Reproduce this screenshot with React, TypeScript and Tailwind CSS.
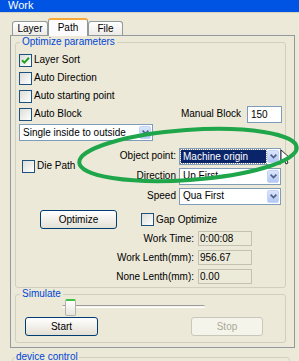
import React from 'react';

// checkbox in the XP luna style
const Check = ({ checked = false }: { checked?: boolean }) => (
  <span className="w-[13px] h-[13px] shrink-0 border border-[#1c5180] bg-linear-to-br from-[#dcdcd7] to-white flex items-center justify-center">
    {checked && (
      <svg width="9" height="9" viewBox="0 0 9 9">
        <path d="M1 4.2 L3.4 6.6 L8 1.8" stroke="#21a121" strokeWidth="2" fill="none" />
      </svg>
    )}
  </span>
);

const CheckRow = ({ label, checked }: { label: string; checked?: boolean }) => (
  <div className="flex items-center gap-[2px] h-[18px]">
    <Check checked={checked} />
    <span>{label}</span>
  </div>
);

const Arrow = () => (
  <span className="w-[12px] h-full shrink-0 rounded-[2px] border border-[#c6d4f7] bg-linear-to-b from-[#dbe6fd] to-[#b2c7f5] flex items-center justify-center">
    <svg width="7" height="5" viewBox="0 0 7 5">
      <path d="M0.6 0.6 L3.5 3.6 L6.4 0.6" stroke="#4d6185" strokeWidth="1.6" fill="none" />
    </svg>
  </span>
);

const Combo = ({ value, className, selected }: { value: string; className: string; selected?: boolean }) => (
  <div className={`flex items-center h-[17px] border border-[#7f9db9] bg-white p-px ${className}`}>
    {selected ? (
      <span className="flex-1 h-full mr-px pl-[2px] leading-[13px] bg-[#0a246a] text-white outline-1 outline-dotted outline-[#8a8a8a] whitespace-nowrap overflow-hidden">
        {value}
      </span>
    ) : (
      <span className="flex-1 pl-[2px] whitespace-nowrap overflow-hidden">{value}</span>
    )}
    <Arrow />
  </div>
);

const StatRow = ({ label, value }: { label: string; value: string }) => (
  <div className="flex items-center h-[19px]">
    <span className="w-[178px] text-right">{label}</span>
    <span className="ml-[4px] w-[54px] h-[15px] pl-[1px] leading-[13px] border border-[#c3c1b4] bg-[#ecead9]">{value}</span>
  </div>
);

export default function App() {
  return (
    <div className="relative w-[299px] h-[361px] overflow-hidden bg-[#ece9d8] text-[10px] text-black font-['Liberation_Sans',Arial,sans-serif] leading-[12px]">
      {/* title bar */}
      <div className="h-[12px] bg-[#0054e3] text-white text-[11px] leading-[11px] pl-[8px]">Work</div>
      <div className="h-px bg-[#d6d2c2]" />

      <div className="pl-[10px]">
        {/* tabs */}
        <div className="flex items-end h-[22px] pl-[2px]">
          <div className="w-[36px] h-[14px] border border-b-0 border-[#919b9c] rounded-t-[3px] bg-linear-to-b from-white to-[#ecebe6] flex items-center justify-center pt-[1px]">
            Layer
          </div>
          <div className="relative z-10 -mb-px w-[40px] h-[18px] border-x border-[#919b9c] border-t-[2px] border-t-[#f5a93a] rounded-t-[3px] bg-[#fcfcfe] flex items-start justify-center pt-[2px]">
            Path
          </div>
          <div className="w-[35px] h-[14px] border border-b-0 border-[#919b9c] rounded-t-[3px] bg-linear-to-b from-white to-[#ecebe6] flex items-center justify-center pt-[1px]">
            File
          </div>
        </div>

        {/* tab panel */}
        <div className="w-[285px] h-[313px] border border-[#919b9c] pl-[4px]">
          <fieldset className="w-[271px] border border-[#d0d0bf] rounded-[3px] pb-[1px]">
            <legend className="ml-[4px] px-[2px] text-[#0046d5] leading-[12px]">Optimize parameters</legend>
            <div className="pl-[3px] pt-[3px]">
              <CheckRow label="Layer Sort" checked />
              <CheckRow label="Auto Direction" />
              <CheckRow label="Auto starting point" />
              <div className="flex items-center h-[18px] pr-[3px]">
                <Check />
                <span className="ml-[2px]">Auto Block</span>
                <span className="ml-auto">Manual Block</span>
                <span className="ml-[6px] w-[35px] h-[17px] pl-[3px] leading-[15px] border border-[#7f9db9] bg-white">150</span>
              </div>
              <Combo value="Single inside to outside" className="w-[134px] mt-px" />
            </div>

            <div className="flex">
              <div className="w-[100px] pl-[6px] pt-[16px]">
                <CheckRow label="Die Path" />
              </div>
              <div className="pt-[5px] grid grid-cols-[60px_102px] gap-x-[3px]">
                <span className="h-[20px] flex items-center justify-end">Object point:</span>
                <div className="h-[20px] flex items-center">
                  <Combo value="Machine origin" className="w-[102px]" selected />
                </div>
                <span className="h-[20px] flex items-center justify-end">Direction</span>
                <div className="h-[20px] flex items-center">
                  <Combo value="Up First" className="w-[102px]" />
                </div>
                <span className="h-[20px] flex items-center justify-end">Speed</span>
                <div className="h-[20px] flex items-center">
                  <Combo value="Qua First" className="w-[102px]" />
                </div>
              </div>
            </div>

            <div className="flex items-center mt-[4px] h-[19px]">
              <button className="ml-[24px] w-[77px] h-[19px] rounded-[3px] border border-[#003c74] bg-linear-to-b from-white to-[#e3e0d5]">
                Optimize
              </button>
              <div className="ml-[24px] flex items-center gap-[2px]">
                <Check />
                <span>Gap Optimize</span>
              </div>
            </div>

            <StatRow label="Work Time:" value="0:00:08" />
            <StatRow label="Work Lenth(mm):" value="956.67" />
            <StatRow label="None Lenth(mm):" value="0.00" />
          </fieldset>

          <fieldset className="w-[271px] mt-px border border-[#d0d0bf] rounded-[3px] pb-[6px]">
            <legend className="ml-[4px] px-[2px] text-[#0046d5] leading-[10px]">Simulate</legend>
            <div className="relative ml-[46px] w-[143px] h-[17px]">
              <div className="absolute left-0 right-0 top-[6px] h-[3px] rounded-full border-t border-[#9d9c99] border-b border-b-white bg-[#f3f3ef]" />
              <div className="absolute left-[3px] top-0 w-[11px] h-[17px] rounded-[2px] border border-[#b2b2ab] border-t-[2px] border-t-[#3fc23f] bg-linear-to-b from-white to-[#e6e5dd]" />
            </div>
            <div className="flex items-start mt-px">
              <button className="ml-[9px] w-[73px] h-[19px] rounded-[3px] border border-[#003c74] bg-linear-to-b from-white to-[#e3e0d5]">
                Start
              </button>
              <button className="ml-[93px] w-[72px] h-[19px] rounded-[3px] border border-[#c9c7ba] bg-[#f5f4ea] text-[#aca899]">
                Stop
              </button>
            </div>
          </fieldset>
        </div>

        <fieldset className="ml-[2px] mt-[3px] w-[278px] h-[30px] border border-[#d0d0bf] rounded-[3px]">
          <legend className="ml-[2px] px-[1px] text-[#0046d5] leading-[12px]">device control</legend>
        </fieldset>
      </div>

      {/* annotation overlay */}
      <svg className="absolute inset-0 pointer-events-none" width="299" height="361" viewBox="0 0 299 361">
        <path d="M281 150 L281 162 L284 159 L286 164 L288 163 L286 158 L290 158 Z" fill="white" stroke="black" strokeWidth="0.8" />
        <ellipse cx="188" cy="155" rx="109" ry="25" transform="rotate(-4 188 155)" fill="none" stroke="#1fa64a" strokeWidth="4" />
      </svg>
    </div>
  );
}
